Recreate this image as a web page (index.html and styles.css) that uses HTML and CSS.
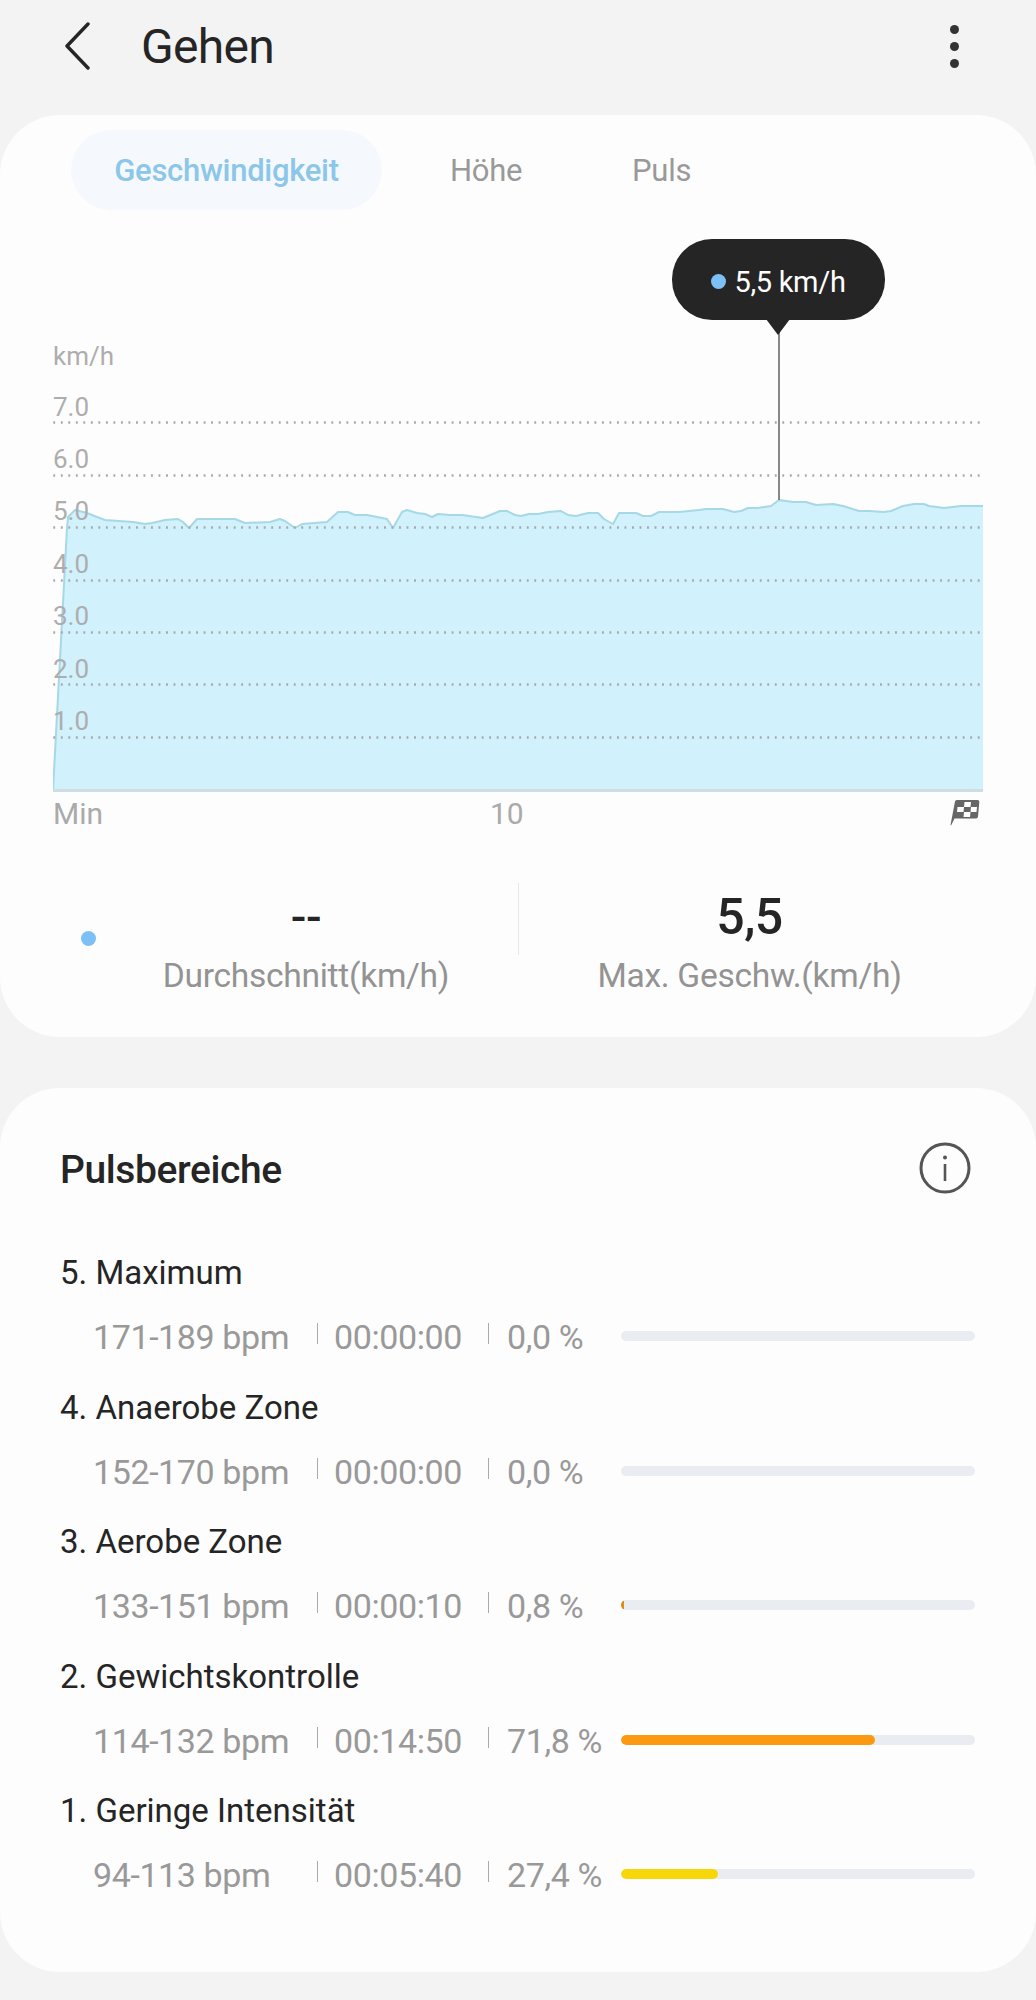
FILE: index.html
```html
<!DOCTYPE html>
<html lang="de">
<head>
  <meta charset="UTF-8">
  <meta name="viewport" content="width=device-width, initial-scale=1.0">
  <title>Gehen</title>
  <link rel="stylesheet" href="styles.css">
</head>
<body>
  <header class="topbar">
    <svg class="back" width="26" height="48" viewBox="0 0 26 48"><path d="M24 2 3 24l21 22" fill="none" stroke="#252525" stroke-width="3.4" stroke-linecap="round" stroke-linejoin="round"/></svg>
    <h1>Gehen</h1>
    <div class="more"><span></span><span></span><span></span></div>
  </header>

  <section class="card speed">
    <nav class="tabs">
      <span class="tab active">Geschwindigkeit</span>
      <span class="tab tab-hoehe">Höhe</span>
      <span class="tab tab-puls">Puls</span>
    </nav>

    <div class="chart">
      <svg class="area" width="930" height="580" viewBox="53 210 930 580">
        <path fill="#d1f1fd" d="M53 790 61 640 67 528 68 517 75 510 87 513 97 517 105 520 133 522 145 524 152 523 165 520 178 519 183 522 189 528 197 519 213 519 235 519 245 523 270 522 280 519 285 521 295 528 302 524 327 522 338 512 348 512 355 515 367 515 387 519 393 528 402 512 407 510 417 513 425 514 432 517 438 514 450 515 462 515 483 518 500 511 507 511 515 515 521 516 529 514 538 514 548 512 561 511 568 515 576 516 588 513 598 513 604 519 613 524 619 513 636 513 643 516 651 516 659 512 679 512 689 511 699 510 706 509 723 509 734 512 741 511 748 508 758 508 771 506 779 500 793 502 806 502 816 505 833 504 843 506 859 511 869 511 884 512 891 511 903 506 914 504 924 504 929 506 944 508 961 506 983 506 983 790Z"/>
        <path fill="none" stroke="#a6d8e6" stroke-width="2" stroke-linejoin="round" d="M53 790 61 640 67 528 68 517 75 510 87 513 97 517 105 520 133 522 145 524 152 523 165 520 178 519 183 522 189 528 197 519 213 519 235 519 245 523 270 522 280 519 285 521 295 528 302 524 327 522 338 512 348 512 355 515 367 515 387 519 393 528 402 512 407 510 417 513 425 514 432 517 438 514 450 515 462 515 483 518 500 511 507 511 515 515 521 516 529 514 538 514 548 512 561 511 568 515 576 516 588 513 598 513 604 519 613 524 619 513 636 513 643 516 651 516 659 512 679 512 689 511 699 510 706 509 723 509 734 512 741 511 748 508 758 508 771 506 779 500 793 502 806 502 816 505 833 504 843 506 859 511 869 511 884 512 891 511 903 506 914 504 924 504 929 506 944 508 961 506 983 506"/>
        <path stroke="#6a6a6a" stroke-width="1.6" d="M779 330V500"/>
      </svg>

      <div class="unit">km/h</div>
      <div class="grid-row">7.0</div>
      <div class="grid-row">6.0</div>
      <div class="grid-row">5.0</div>
      <div class="grid-row">4.0</div>
      <div class="grid-row">3.0</div>
      <div class="grid-row">2.0</div>
      <div class="grid-row">1.0</div>
      <div class="grid-base"></div>

      <div class="tooltip"><i></i>5,5 km/h</div>
    </div>

    <div class="axis">
      <span class="axis-min">Min</span>
      <span class="axis-mid">10</span>
      <svg class="flag" width="30" height="27" viewBox="0 0 30 27">
        <path fill="#666" d="M5 2.500Q5.300 1 7 1H27.500Q29.500 1 29.300 3L28 17.500Q27.800 19.500 26 19.500H4.500L1 26.500 0.500 26Z"/>
        <path fill="#fff" d="M14.500 3H21L20.500 8H14ZM7.500 8H14L13.500 13H7ZM21 8H27L26.500 13H20.500ZM14 13H20.500L20 18H13.500Z"/>
      </svg>
    </div>

    <div class="stats">
      <i class="stat-dot"></i>
      <div class="stat stat-avg">
        <div class="stat-value">--</div>
        <div class="stat-label">Durchschnitt(km/h)</div>
      </div>
      <div class="stat-divider"></div>
      <div class="stat stat-max">
        <div class="stat-value">5,5</div>
        <div class="stat-label">Max. Geschw.(km/h)</div>
      </div>
    </div>
  </section>

  <section class="card zones">
    <div class="zones-head">
      <h2>Pulsbereiche</h2>
      <svg width="52" height="52" viewBox="0 0 52 52">
        <circle cx="26" cy="26" r="24" fill="none" stroke="#555" stroke-width="3"/>
        <circle cx="26" cy="15.500" r="2" fill="#555"/>
        <path d="M26 22V39" stroke="#555" stroke-width="2.600"/>
      </svg>
    </div>

    <div class="zone">
      <div class="zone-name">5. Maximum</div>
      <div class="zone-row">
        <span class="range">171-189 bpm</span><span class="time">00:00:00</span><span class="pct">0,0 %</span>
        <div class="bar"></div>
      </div>
    </div>
    <div class="zone">
      <div class="zone-name">4. Anaerobe Zone</div>
      <div class="zone-row">
        <span class="range">152-170 bpm</span><span class="time">00:00:00</span><span class="pct">0,0 %</span>
        <div class="bar"></div>
      </div>
    </div>
    <div class="zone">
      <div class="zone-name">3. Aerobe Zone</div>
      <div class="zone-row">
        <span class="range">133-151 bpm</span><span class="time">00:00:10</span><span class="pct">0,8 %</span>
        <div class="bar"><div class="fill fill-dark" style="width:0.8%"></div></div>
      </div>
    </div>
    <div class="zone">
      <div class="zone-name">2. Gewichtskontrolle</div>
      <div class="zone-row">
        <span class="range">114-132 bpm</span><span class="time">00:14:50</span><span class="pct">71,8 %</span>
        <div class="bar"><div class="fill fill-orange" style="width:71.8%"></div></div>
      </div>
    </div>
    <div class="zone">
      <div class="zone-name">1. Geringe Intensität</div>
      <div class="zone-row">
        <span class="range">94-113 bpm</span><span class="time">00:05:40</span><span class="pct">27,4 %</span>
        <div class="bar"><div class="fill fill-yellow" style="width:27.4%"></div></div>
      </div>
    </div>
  </section>
</body>
</html>
```

FILE: styles.css
```css
body { margin: 0; width: 1036px; background: #f3f3f3; color: #252525; font-family: Roboto, 'Noto Sans', sans-serif; }

.topbar { height: 115px; display: flex; align-items: center; padding: 0 0 23px 64px; box-sizing: border-box; }
.topbar h1 { margin: 0 0 0 51px; font-size: 48px; font-weight: 400; letter-spacing: -0.7px; }
.back { flex: none; }
.more { margin-left: auto; margin-right: 77px; display: flex; flex-direction: column; gap: 8px; }
.more span { width: 9px; height: 9px; border-radius: 50%; background: #333; }

.card { background: #fdfdfd; border-radius: 60px; }
.speed { height: 922px; padding: 15px 53px 0; box-sizing: border-box; }

.tabs { display: flex; height: 80px; align-items: center; }
.tab { font-size: 31px; color: #999; letter-spacing: -0.3px; }
.tab.active { width: 311px; height: 80px; margin-left: 18px; border-radius: 40px; background: #f5f9fd; color: #8cc6e8; font-weight: 500; display: flex; align-items: center; justify-content: center; }
.tab-hoehe { margin-left: 68px; }
.tab-puls { margin-left: 110px; }

.chart { position: relative; height: 580px; width: 930px; box-sizing: border-box; padding-top: 130px; font-size: 26px; color: #adadad; }
.area { position: absolute; left: 0; top: 0; }
.unit { position: relative; height: 30.6px; line-height: 33px; }
.grid-row { position: relative; height: 52.4px; box-sizing: border-box; padding-top: 15px; line-height: 42px; }
.grid-row::after { content: ""; position: absolute; left: 0; right: 0; bottom: -1.5px; height: 3px; background: radial-gradient(circle, #a8a8a8 1px, transparent 1.4px) 5px 0 / 7.53px 3px repeat-x; }
.grid-base { position: absolute; left: 0; right: 0; bottom: -2px; height: 3px; background: #cfdde2; }

.tooltip { position: absolute; left: 619px; top: 29px; width: 213px; height: 81px; box-sizing: border-box; padding-top: 4px; border-radius: 40px; background: #252525; color: #fff; font-size: 29px; display: flex; align-items: center; justify-content: center; letter-spacing: -0.3px; }
.tooltip i { width: 15px; height: 15px; border-radius: 50%; background: #7cc0f5; margin-right: 8px; }
.tooltip::after { content: ""; position: absolute; left: 94px; top: 80px; border-left: 12px solid transparent; border-right: 12px solid transparent; border-top: 16px solid #252525; }

.axis { display: flex; align-items: center; height: 46px; font-size: 30px; color: #aaa; }
.axis-min { width: 437px; }
.axis-mid { flex: 1; }
.flag { margin: 0 3px 2px 0; }

.stats { position: relative; display: flex; margin: 55px -53px 0; height: 100px; }
.stat-dot { position: absolute; left: 81px; top: 40px; width: 15px; height: 15px; border-radius: 50%; background: #7cc0f5; }
.stat { text-align: center; }
.stat-avg { width: 518px; padding-left: 94px; box-sizing: border-box; }
.stat-max { width: 463px; padding-right: 2px; box-sizing: border-box; }
.stat-divider { width: 1px; height: 72px; margin-top: -8px; background: #e8e8e8; flex: none; }
.stat-value { font-size: 50px; font-weight: 500; line-height: 53px; letter-spacing: -0.5px; }
.stat-avg .stat-value { font-size: 46px; }
.stat-label { margin-top: 11px; font-size: 33.6px; line-height: 42px; color: #939393; letter-spacing: -0.3px; }

.zones { margin-top: 51px; height: 884px; padding: 0 60px; box-sizing: border-box; margin-bottom: 28px; }
.zones-head { display: flex; justify-content: space-between; align-items: center; height: 160px; padding: 4px 5px 0 0; box-sizing: border-box; }
.zones-head svg { margin-top: -4px; }
.zones-head h2 { margin: 0; font-size: 39px; font-weight: 500; letter-spacing: -0.4px; }

.zone { height: 134.6px; }
.zone-name { font-size: 33px; line-height: 50px; }
.zone-row { display: flex; align-items: center; margin-top: 14px; height: 50px; padding-left: 33px; font-size: 34px; color: #999; letter-spacing: -0.4px; }
.range { width: 224px; flex: none; }
.time { width: 171px; flex: none; box-sizing: border-box; padding-left: 17px; position: relative; }
.pct { width: 133px; flex: none; box-sizing: border-box; padding-left: 19px; position: relative; }
.time::before, .pct::before { content: ""; position: absolute; left: 0; top: 6px; width: 1px; height: 21px; background: #aaa; }
.bar { width: 354px; height: 10px; border-radius: 5px; background: #e9edf1; overflow: hidden; margin-bottom: 2px; }
.fill { height: 100%; border-radius: 5px; }
.fill-dark { background: #e08a10; }
.fill-orange { background: #fb9a10; }
.fill-yellow { background: #f8d70a; }
```
